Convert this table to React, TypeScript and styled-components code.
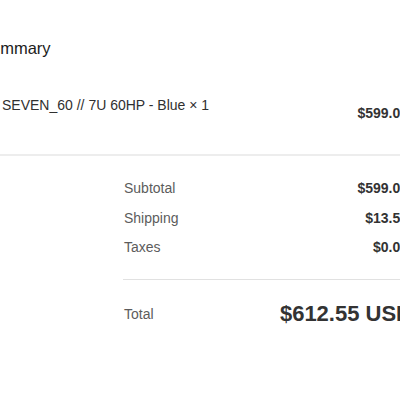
import React from "react";
import styled, { createGlobalStyle } from "styled-components";

const Global = createGlobalStyle`
  html, body { margin: 0; padding: 0; background: #ffffff; }
  body { font-family: "Liberation Sans", Arial, sans-serif; }
`;

const Viewport = styled.div`
  width: 400px;
  height: 400px;
  overflow: hidden;
  background: #ffffff;
`;

const Panel = styled.section`
  width: 431px;
  margin-left: -23px;
  padding-top: 36px;
  box-sizing: border-box;
`;

const Heading = styled.h2`
  margin: 0 0 0 3px;
  font-size: 16.5px;
  line-height: 24px;
  font-weight: 400;
  color: #1c1c1c;
`;

const ProductRow = styled.div`
  display: flex;
  justify-content: space-between;
  align-items: flex-start;
  margin-top: 35px;
  padding-left: 25px;
  height: 45px;
`;

const ProductName = styled.span`
  font-size: 14px;
  line-height: 20px;
  color: #303030;
`;

const Price = styled.span`
  font-size: 14px;
  line-height: 20px;
  font-weight: 700;
  color: #333333;
`;

const ProductPrice = styled(Price)`
  margin-top: 8px;
`;

const Divider = styled.hr`
  margin: 14px 0 0 23px;
  border: 0;
  height: 2px;
  background: #ededed;
`;

const Totals = styled.div`
  margin-left: 147px;
  padding-top: 22px;
  display: flex;
  flex-direction: column;
  gap: 9.5px;
`;

const Row = styled.div`
  display: flex;
  justify-content: space-between;
  align-items: center;
`;

const Label = styled.span`
  font-size: 14px;
  line-height: 20px;
  color: #5c5c5c;
`;

const TotalDivider = styled.hr`
  margin: 22px 0 0 146px;
  border: 0;
  height: 1px;
  background: #e1e1e1;
`;

const TotalRow = styled(Row)`
  margin: 20px -4px 0 147px;
  height: 28px;
`;

const GrandTotal = styled.span`
  font-size: 22px;
  line-height: 28px;
  font-weight: 700;
  color: #333333;
`;

export default function App() {
  return (
    <>
      <Global />
      <Viewport>
        <Panel>
          <Heading>Summary</Heading>
          <ProductRow>
            <ProductName>SEVEN_60 // 7U 60HP - Blue × 1</ProductName>
            <ProductPrice>$599.00</ProductPrice>
          </ProductRow>
          <Divider />
          <Totals>
            <Row>
              <Label>Subtotal</Label>
              <Price>$599.00</Price>
            </Row>
            <Row>
              <Label>Shipping</Label>
              <Price>$13.55</Price>
            </Row>
            <Row>
              <Label>Taxes</Label>
              <Price>$0.00</Price>
            </Row>
          </Totals>
          <TotalDivider />
          <TotalRow>
            <Label>Total</Label>
            <GrandTotal>$612.55 USD</GrandTotal>
          </TotalRow>
        </Panel>
      </Viewport>
    </>
  );
}
